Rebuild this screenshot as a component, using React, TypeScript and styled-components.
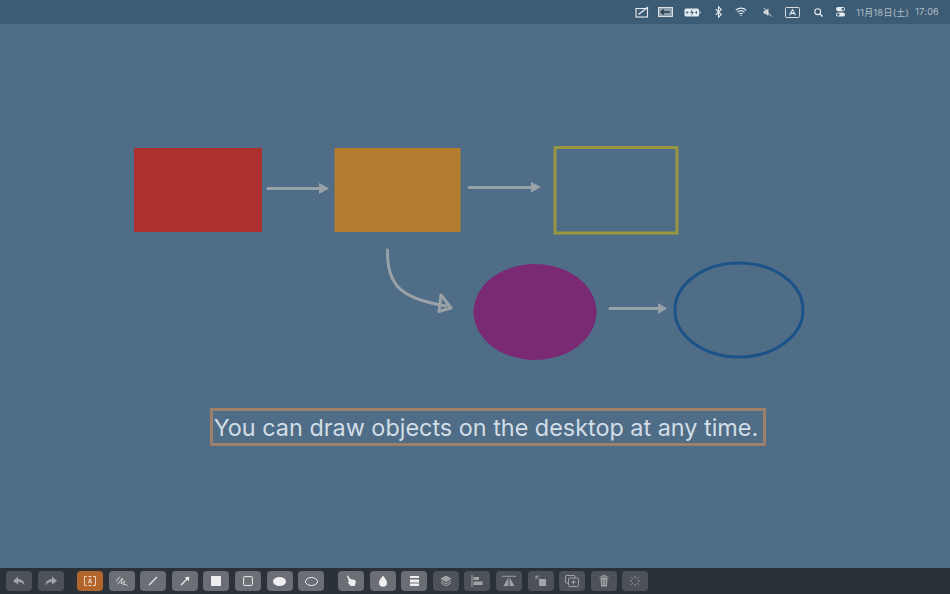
import React from 'react';
import styled, { createGlobalStyle } from 'styled-components';

const GlobalStyle = createGlobalStyle`
  html, body { margin: 0; padding: 0; width: 950px; height: 594px; overflow: hidden; }
  body { font-family: "Inter", "Liberation Sans", "Noto Sans CJK JP", sans-serif; }
`;

const Desktop = styled.div`
  display: flex;
  flex-direction: column;
  width: 950px;
  height: 594px;
  background: #4f6d87;
`;

const MenuBar = styled.div`
  display: flex;
  align-items: center;
  justify-content: flex-end;
  height: 24px;
  flex-shrink: 0;
  padding-right: 11px;
  background: #3c5b75;
  color: #e6ebef;
`;

const MenuIcon = styled.span<{ $w: number; $mr: number }>`
  display: flex;
  align-items: center;
  justify-content: center;
  width: ${({ $w }) => $w}px;
  margin-right: ${({ $mr }) => $mr}px;
`;

const Clock = styled.span`
  display: flex;
  gap: 6px;
  font-size: 9px;
  letter-spacing: 0.3px;
  color: #b4c0ca;
  font-family: "Inter", "Noto Sans CJK JP", sans-serif;
  white-space: nowrap;
`;

const Canvas = styled.div`
  position: relative;
  flex: 1;
`;

const Drawing = styled.svg`
  position: absolute;
  left: 0;
  top: 0;
  display: block;
`;

const Caption = styled.div`
  position: absolute;
  left: 210px;
  top: 384px;
  width: 546px;
  height: 31px;
  padding: 1px 4px 0 0;
  border: 3px solid #9c8069;
  border-radius: 1px;
  display: flex;
  align-items: center;
  justify-content: center;
  font-size: 23.4px;
  color: #d2dde6;
  white-space: nowrap;
`;

const ToolBar = styled.div`
  display: flex;
  align-items: center;
  height: 26px;
  flex-shrink: 0;
  padding-left: 6px;
  background: #2b3138;
`;

const ToolGroup = styled.div<{ $mr: number }>`
  display: flex;
  gap: 5.6px;
  margin-right: ${({ $mr }) => $mr}px;
`;

const Tool = styled.div<{ $kind?: 'on' | 'dim' | 'active' }>`
  display: flex;
  align-items: center;
  justify-content: center;
  width: 26px;
  height: 20px;
  border-radius: 4px;
  background: ${({ $kind }) =>
    $kind === 'active' ? '#b1652d' : $kind === 'dim' ? '#4c5258' : '#6b6f75'};
  color: ${({ $kind }) => ($kind === 'dim' ? '#a0a4a8' : '#eeeeee')};
`;

const Ic = ({ w = 14, h = 14, children }: { w?: number; h?: number; children: React.ReactNode }) => (
  <svg width={w} height={h} viewBox={`0 0 ${w} ${h}`} fill="none" stroke="currentColor" strokeWidth="1.1">
    {children}
  </svg>
);

const Arrow = ({ d, head }: { d: string; head: string }) => (
  <g>
    <path d={d} fill="none" stroke="#9aa2a9" strokeWidth="3" strokeLinecap="round" />
    <polygon points={head} fill="#9aa2a9" />
  </g>
);

const App: React.FC = () => {
  return (
    <Desktop>
      <GlobalStyle />
      <MenuBar>
        <MenuIcon $w={14} $mr={9}>
          <Ic w={14} h={12}>
            <rect x="1" y="2.5" width="11.5" height="8.5" />
            <path d="M3.5 8.5 L13 1" strokeWidth="1.4" />
          </Ic>
        </MenuIcon>
        <MenuIcon $w={15} $mr={11}>
          <svg width="15" height="10" viewBox="0 0 15 10" fill="none">
            <rect x="0.5" y="0.5" width="14" height="9" fill="#8d9eac" stroke="currentColor" strokeWidth="0.9" />
            <path d="M3 5 H12 M6 2.5 L3 5 L6 7.5" stroke="#24384a" strokeWidth="1.3" />
          </svg>
        </MenuIcon>
        <MenuIcon $w={17} $mr={14}>
          <svg width="17" height="9" viewBox="0 0 17 9" fill="none">
            <rect x="0.5" y="0.5" width="14.5" height="8" rx="1.5" fill="#e6ebef" />
            <rect x="15.5" y="3" width="1.2" height="3" fill="#a8b5c0" />
            <path d="M8.6 1 L6 4.7 H8 L7 8 L10 4 H8 Z M2.5 3 L5 4.5 L2.5 6 Z M13 3 L10.8 4.5 L13 6 Z" fill="#3c5b75" />
          </svg>
        </MenuIcon>
        <MenuIcon $w={7} $mr={13}>
          <Ic w={7} h={12}>
            <path d="M0.7 3.2 L6.2 8.6 L3.5 11.2 V0.8 L6.2 3.4 L0.7 8.8" />
          </Ic>
        </MenuIcon>
        <MenuIcon $w={12} $mr={16}>
          <svg width="12" height="10" viewBox="0 0 13 10" fill="none" stroke="currentColor" strokeWidth="1.2">
            <path d="M0.8 3.2 C4 0 9 0 12.2 3.2" />
            <path d="M2.7 5.2 C4.9 3.2 8.1 3.2 10.3 5.2" />
            <path d="M4.6 7.1 C5.7 6.2 7.3 6.2 8.4 7.1" />
            <circle cx="6.5" cy="8.8" r="0.7" fill="currentColor" stroke="none" />
          </svg>
        </MenuIcon>
        <MenuIcon $w={9} $mr={13}>
          <svg width="9" height="11" viewBox="0 0 10 11" fill="none">
            <path d="M0.5 3.5 H2.5 L6 0.8 V9.5 L2.5 7 H0.5 Z" fill="#c8d1d9" />
            <path d="M1 0.5 L9.5 10" stroke="#e6ebef" strokeWidth="1" />
          </svg>
        </MenuIcon>
        <MenuIcon $w={15} $mr={14}>
          <svg width="15" height="11" viewBox="0 0 15 11" fill="none">
            <rect x="0.5" y="0.5" width="14" height="10" rx="1" stroke="currentColor" strokeWidth="0.9" />
            <path d="M4.6 8.2 L7.5 2.6 L10.4 8.2 M5.6 6.4 H9.4" stroke="currentColor" strokeWidth="1.1" />
          </svg>
        </MenuIcon>
        <MenuIcon $w={9} $mr={13}>
          <Ic w={9} h={9}>
            <circle cx="3.7" cy="3.7" r="2.9" />
            <path d="M5.8 5.8 L8.6 8.6" strokeWidth="1.3" />
          </Ic>
        </MenuIcon>
        <MenuIcon $w={9} $mr={11}>
          <svg width="9" height="10" viewBox="0 0 9 10">
            <rect x="0" y="0" width="9" height="4.2" rx="2.1" fill="#e6ebef" />
            <circle cx="6.8" cy="2.1" r="1.3" fill="#3c5b75" />
            <rect x="0" y="5.4" width="9" height="4.2" rx="2.1" fill="#e6ebef" />
            <circle cx="2.2" cy="7.5" r="1.3" fill="#3c5b75" />
          </svg>
        </MenuIcon>
        <Clock>
          <span>11月18日(土)</span>
          <span>17:06</span>
        </Clock>
      </MenuBar>

      <Canvas>
        <Drawing width="950" height="544" viewBox="0 24 950 544">
          <rect x="134" y="148" width="128" height="84" fill="#ad302e" />
          <rect x="334.5" y="148" width="126" height="84" fill="#b47c2f" />
          <rect x="555" y="147.5" width="122" height="85.5" fill="none" stroke="#98963f" strokeWidth="3" />
          <ellipse cx="535" cy="312" rx="61.5" ry="48" fill="#7a2a73" />
          <ellipse cx="739" cy="310" rx="64" ry="47" fill="none" stroke="#1b5288" strokeWidth="3" />
          <Arrow d="M268 188.5 H320" head="319,183 329,188.5 319,194" />
          <Arrow d="M469 187.5 H532" head="531,182 541,187 531,192.5" />
          <Arrow d="M610 308.5 H658" head="658,303 667,308.5 658,314" />
          <path
            d="M387.5 250 C387 270 392 284 404 292 C414 299 428 303 446 306"
            fill="none"
            stroke="#9aa2a9"
            strokeWidth="3"
            strokeLinecap="round"
          />
          <path
            d="M441 295 L451 308 L439 311.5 Z"
            fill="none"
            stroke="#9aa2a9"
            strokeWidth="3"
            strokeLinejoin="round"
          />
        </Drawing>
        <Caption>You can draw objects on the desktop at any time.</Caption>
      </Canvas>

      <ToolBar>
        <ToolGroup $mr={13.4}>
          <Tool $kind="dim">
            <Ic w={14} h={12}>
              <path d="M6 1.5 L1 6 L6 9.5 V7 C9 7 11 8 12.5 10.5 C12.5 6.5 10 4.3 6 4 Z" fill="currentColor" stroke="none" />
            </Ic>
          </Tool>
          <Tool $kind="dim">
            <Ic w={14} h={12}>
              <path d="M8 1.5 L13 6 L8 9.5 V7 C5 7 3 8 1.5 10.5 C1.5 6.5 4 4.3 8 4 Z" fill="currentColor" stroke="none" />
            </Ic>
          </Tool>
        </ToolGroup>
        <ToolGroup $mr={13.8}>
          <Tool $kind="active">
            <svg width="12" height="10" viewBox="0 0 12 10" fill="none" stroke="#f2dcc8" strokeWidth="0.9">
              <path d="M3 0.5 H0.5 V9.5 H3 M9 0.5 H11.5 V9.5 H9 M4.5 0.5 H7.5 M4.5 9.5 H7.5" />
              <path d="M4.2 7.4 L6 2.6 L7.8 7.4 M4.9 6 H7.1" />
            </svg>
          </Tool>
          <Tool>
            <svg width="13" height="12" viewBox="0 0 13 12" fill="none" stroke="currentColor" strokeWidth="0.9" opacity="0.85">
              <path d="M1 6.5 L5 1.5 M2.5 9.5 L7.5 3 L6 9 L9.5 6 L8.5 10 C9.5 9 11 9.5 12.5 10.5" />
            </svg>
          </Tool>
          <Tool>
            <Ic w={10} h={10}>
              <path d="M1 9 L9 1" />
            </Ic>
          </Tool>
          <Tool>
            <svg width="10" height="10" viewBox="0 0 10 10">
              <path d="M1 9 L7 3" stroke="currentColor" strokeWidth="1.2" />
              <polygon points="4.8,1.3 9.3,0.7 8.7,5.2" fill="currentColor" />
            </svg>
          </Tool>
          <Tool>
            <svg width="10" height="10" viewBox="0 0 10 10">
              <rect width="10" height="10" rx="0.5" fill="#eeeeee" />
            </svg>
          </Tool>
          <Tool>
            <svg width="10" height="10" viewBox="0 0 10 10" fill="none">
              <rect x="0.6" y="0.6" width="8.8" height="8.8" rx="1" stroke="currentColor" />
            </svg>
          </Tool>
          <Tool>
            <svg width="13" height="9" viewBox="0 0 13 9">
              <ellipse cx="6.5" cy="4.5" rx="6.5" ry="4.5" fill="#eeeeee" />
            </svg>
          </Tool>
          <Tool>
            <svg width="13" height="9" viewBox="0 0 13 9" fill="none">
              <ellipse cx="6.5" cy="4.5" rx="6" ry="4" stroke="currentColor" />
            </svg>
          </Tool>
        </ToolGroup>
        <ToolGroup $mr={0}>
          <Tool>
            <svg width="12" height="12" viewBox="0 0 12 12">
              <path d="M2 1 L3 0.6 L5.2 4 L10 5 C11 6 11 9 9.5 11 H5.5 L2.5 7 L4 6.8 Z" fill="#eeeeee" />
            </svg>
          </Tool>
          <Tool>
            <svg width="10" height="12" viewBox="0 0 10 12">
              <path d="M5 0.5 C6.5 3 9 5 9 7.8 A4 4 0 0 1 1 7.8 C1 5 3.5 3 5 0.5 Z" fill="#eeeeee" />
            </svg>
          </Tool>
          <Tool>
            <svg width="9" height="10" viewBox="0 0 9 10" fill="#eeeeee">
              <rect y="0" width="9" height="2" />
              <rect y="3.5" width="9" height="3" />
              <rect y="7.5" width="9" height="2.5" />
            </svg>
          </Tool>
          <Tool $kind="dim">
            <svg width="12" height="12" viewBox="0 0 12 12" fill="none" stroke="currentColor" strokeWidth="1">
              <path d="M6 1 L11 3.8 L6 6.6 L1 3.8 Z" fill="currentColor" />
              <path d="M1 6 L6 8.8 L11 6 M1 8 L6 10.8 L11 8" />
            </svg>
          </Tool>
          <Tool $kind="dim">
            <svg width="12" height="12" viewBox="0 0 12 12" fill="currentColor">
              <rect x="0.5" y="0" width="1" height="12" />
              <rect x="2.5" y="2" width="5.5" height="3" />
              <rect x="2.5" y="6.5" width="9" height="3.5" />
            </svg>
          </Tool>
          <Tool $kind="dim">
            <svg width="14" height="12" viewBox="0 0 14 12" fill="currentColor">
              <rect x="0" y="0.8" width="14" height="0.9" />
              <path d="M6.4 2.5 V11 H1.5 Z M7.6 2.5 V11 H12.5 Z" />
            </svg>
          </Tool>
          <Tool $kind="dim">
            <svg width="12" height="12" viewBox="0 0 12 12">
              <rect x="4" y="4" width="7" height="7" fill="currentColor" />
              <path d="M1 4 V1.2 H3.8 M1 1.2 L3.5 3.7" fill="none" stroke="currentColor" strokeWidth="0.9" />
            </svg>
          </Tool>
          <Tool $kind="dim">
            <svg width="14" height="12" viewBox="0 0 14 12" fill="none" stroke="currentColor">
              <rect x="0.5" y="0.5" width="9.5" height="7.5" rx="1" />
              <rect x="3.5" y="3" width="10" height="8.5" rx="1" fill="#4c5258" />
              <path d="M8.5 5 V9.5 M6.2 7.2 H10.8" />
            </svg>
          </Tool>
          <Tool $kind="dim">
            <svg width="10" height="12" viewBox="0 0 10 12">
              <path d="M0.5 2 H9.5 M3.5 2 V0.7 H6.5 V2" fill="none" stroke="currentColor" />
              <path d="M1.5 3 H8.5 L8 11.5 H2 Z" fill="currentColor" />
              <path d="M3.7 4.5 V10 M6.3 4.5 V10" stroke="#4c5258" strokeWidth="0.8" />
            </svg>
          </Tool>
          <Tool $kind="dim">
            <svg width="12" height="12" viewBox="0 0 12 12" fill="none" stroke="currentColor" strokeWidth="0.9">
              <path d="M6 0.8 V3 M6 9 V11.2 M0.8 6 H3 M9 6 H11.2 M2.3 2.3 L3.9 3.9 M8.1 8.1 L9.7 9.7 M2.3 9.7 L3.9 8.1 M8.1 3.9 L9.7 2.3" />
            </svg>
          </Tool>
        </ToolGroup>
      </ToolBar>
    </Desktop>
  );
};

export default App;
